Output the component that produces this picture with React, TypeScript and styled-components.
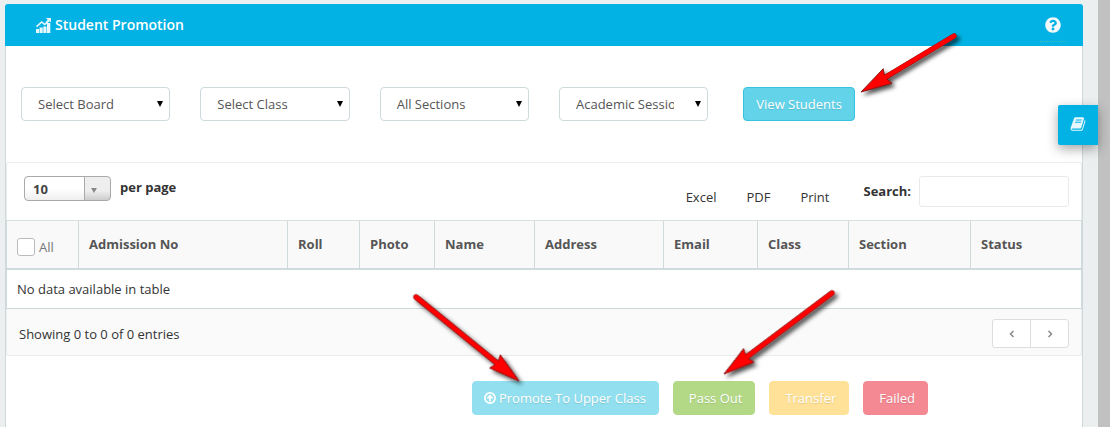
import React from "react";
import styled, { createGlobalStyle } from "styled-components";
import { FaQuestionCircle } from "react-icons/fa";

const GlobalStyle = createGlobalStyle`
  *, *::before, *::after { box-sizing: border-box; }
  body {
    margin: 0;
    background: #ebeff0;
    color: #333;
    font: 13px/20px "Open Sans", sans-serif;
    overflow: hidden;
  }
  button, input, select { font: inherit; }
`;

const Page = styled.div`
  position: relative;
  display: flex;
  min-height: 100vh;
`;

const Main = styled.main`
  flex: 1;
  display: flex;
  min-width: 0;
  padding: 4px 15px 0 5px;
`;

const ScrollTrack = styled.div`
  width: 12px;
  background: #c1c1c1;
`;

const Panel = styled.section`
  flex: 1;
  display: flex;
  flex-direction: column;
  min-width: 0;
`;

const PanelHeader = styled.header`
  display: flex;
  align-items: center;
  justify-content: space-between;
  height: 42px;
  padding: 0 17px 0 31px;
  border-radius: 3px 3px 0 0;
  background: #03b2e4;
  color: #fff;
`;

const Title = styled.h1`
  display: flex;
  align-items: center;
  gap: 4px;
  margin: 0;
  font-size: 14px;
  font-weight: 600;
`;

const HelpLink = styled.a`
  display: flex;
  justify-content: center;
  align-items: center;
  width: 26px;
  height: 34px;
  border-bottom: 1px dotted #4db8b8;
  color: #f4f9fb;
  font-size: 16px;
`;

const PanelBody = styled.div`
  flex: 1;
  padding-top: 41px;
  border: solid #cfd9db;
  border-width: 0 1px;
  background: #fff;
`;

const Filters = styled.form`
  display: grid;
  grid-template-columns: repeat(6, 1fr);
`;

const FilterCell = styled.div`
  display: flex;
  padding: 0 15px;
`;

const SelectBox = styled.div`
  position: relative;
  flex: 1;
  min-width: 0;

  &::after {
    content: "";
    position: absolute;
    top: 14px;
    right: 7px;
    border: solid transparent;
    border-width: 6px 3px 0;
    border-top-color: #000;
    pointer-events: none;
  }
`;

const Select = styled.select`
  display: block;
  width: 100%;
  height: 34px;
  padding: 0 33px 0 16px;
  border: 1px solid #cfdadd;
  border-radius: 4px;
  background: #fff;
  color: #555;
  appearance: none;
  text-overflow: clip;
`;

const Button = styled.button<{ $bg: string; $edge?: string; $pad?: string }>`
  display: flex;
  align-items: center;
  gap: 3px;
  height: 34px;
  padding: ${(p) => p.$pad ?? "0 12px"};
  border: 1px solid ${(p) => p.$edge ?? p.$bg};
  border-radius: 4px;
  background: ${(p) => p.$bg};
  color: #fff;
  white-space: nowrap;
  text-shadow: 0 1px 1px rgba(0, 0, 0, 0.12);
`;

const ViewCell = styled(FilterCell)`
  padding: 0 20px;
`;

const DataGrid = styled.div`
  margin-top: 41px;
`;

const Toolbar = styled.div`
  display: flex;
  align-items: flex-start;
  height: 58px;
  padding: 13px 12px 0 17px;
  border: 1px solid #eaeded;
  border-bottom: 0;
  border-radius: 3px 3px 0 0;
`;

const PageSize = styled.label`
  display: flex;
  gap: 9px;
  margin-right: auto;
  font-weight: 700;
  line-height: 22px;
`;

const PageSizeBox = styled.span`
  position: relative;

  &::after {
    content: "";
    position: absolute;
    top: 12px;
    right: 14px;
    border: solid transparent;
    border-width: 5px 3px 0;
    border-top-color: #888;
    pointer-events: none;
  }
`;

const PageSizeSelect = styled.select`
  display: block;
  width: 87px;
  height: 25px;
  padding: 0 8px;
  border: 1px solid #aaa;
  border-radius: 4px;
  background:
    linear-gradient(#aaa, #aaa) right 25px top / 1px 100% no-repeat,
    linear-gradient(#eee 60%, #ccc) right top / 25px 100% no-repeat,
    linear-gradient(#fff 50%, #eee);
  color: #444;
  font-weight: 700;
  appearance: none;
`;

const Exports = styled.nav`
  display: flex;
  gap: 30px;
  padding: 11px 34px 0 0;
`;

const ExportLink = styled.a`
  color: #333;
  text-decoration: none;
`;

const Search = styled.label`
  display: flex;
  gap: 8px;
  font-weight: 700;
  line-height: 30px;
`;

const SearchInput = styled.input`
  width: 150px;
  height: 31px;
  padding: 0 8px;
  border: 1px solid #eaeaea;
  border-radius: 3px;
  background: #fff;
`;

const Table = styled.table`
  width: 100%;
  table-layout: fixed;
  border-collapse: separate;
  border-spacing: 0;
  border: solid #cfdadd;
  border-width: 0 1px;
`;

const Th = styled.th`
  height: 50px;
  padding: 0 10px 2px;
  border-top: 1px solid #d8dfe1;
  border-bottom: 2px solid #cfdadd;
  background: #f9f9f9;
  color: #555;
  font-weight: 700;
  text-align: left;

  & + & { border-left: 1px solid #cfdadd; }
`;

const Td = styled.td`
  height: 39px;
  padding: 0 10px;
  border-bottom: 1px solid #cfdadd;
`;

const SelectAll = styled.label`
  display: flex;
  align-items: center;
  gap: 4px;
  padding-top: 7px;
  color: #777;
  font-weight: 400;
`;

const Checkbox = styled.input`
  width: 18px;
  height: 18px;
  margin: 0;
  border: 1px solid #bbb;
  border-radius: 3px;
  background: #fff;
  appearance: none;
`;

const Footer = styled.div`
  display: flex;
  align-items: flex-start;
  justify-content: space-between;
  height: 47px;
  padding: 10px 12px 0;
  border: 1px solid #eaeded;
  border-top: 0;
  border-radius: 0 0 3px 3px;
  background: #fafafa;
  line-height: 30px;
`;

const Pager = styled.nav`
  display: flex;
  border: 1px solid #ddd;
  border-radius: 3px;
  background: #fff;
`;

const PagerButton = styled.button`
  width: 37px;
  height: 27px;
  padding: 0;
  border: 0;
  background: none;
  color: #888;
  line-height: 0;

  & + & {
    width: 38px;
    border-left: 1px solid #ddd;
  }
`;

const Actions = styled.div`
  display: flex;
  gap: 14px;
  justify-content: flex-end;
  padding: 25px 154px 12px 0;
`;

const SideTab = styled.button`
  position: absolute;
  top: 105px;
  right: 12px;
  display: flex;
  align-items: center;
  justify-content: center;
  width: 40px;
  height: 40px;
  padding: 0 0 2px;
  border: 0;
  border-radius: 2px 0 0 2px;
  background: #03b2e4;
  box-shadow: 0 4px 12px rgba(0, 0, 0, 0.35);
`;

const Annotations = styled.svg`
  position: absolute;
  top: 0;
  left: 0;
  pointer-events: none;
  overflow: visible;
`;

const ChartIcon = () => (
  <svg width="15" height="15" viewBox="0 0 15 15" aria-hidden="true">
    <path
      fill="#fff"
      fillOpacity=".9"
      d="M0 11h3v4H0zM3.500 9.500h3.200V15H3.500zM7.300 8.500h3.200V15H7.300zM11 5h3.300v10H11zM10 0h5v4.500l-1.500-1.300L8.800 7.500 5.800 5 1 9.200 0 8 5.600 3 8.700 5.500l3-3.700z"
    />
  </svg>
);

const BookIcon = () => (
  <svg width="16" height="16" viewBox="0 0 1664 1792" aria-hidden="true">
    <path
      fill="#e6f7fd"
      d="M1639 478q40 57 18 129l-275 906q-19 64-76.500 107.500t-122.500 43.500h-923q-77 0-148.500-53.500t-99.500-131.500q-24-67-2-127 0-4 3-27t4-37q1-8-3-21.500t-3-19.500q2-11 8-21t16.500-23.500 16.500-23.500q23-38 45-91.500t30-91.500q3-10 .5-30t-.5-28q3-11 17-28t17-23q21-36 42-92t25-90q1-9-2.500-32t.5-28q4-13 22-30.500t22-22.500q19-26 42.500-84.500t27.500-96.500q1-8-3-25.500t-2-26.500q2-8 9-18t18-23 17-21q8-12 16.500-30.500t15-35 16-36 19.500-32 26.500-23.500 36-11.500 47.500 5.500l-1 3q38-9 51-9h761q74 0 114 56t18 130l-274 906q-36 119-71.500 153.500t-128.500 34.500h-869q-27 0-38 15-11 16-1 43 24 70 144 70h923q29 0 56-15.500t35-41.500l300-987q7-22 5-57 38 15 59 43zm-1064 2q-4 13 2 22.500t20 9.500h608q13 0 25.500-9.500t16.500-22.500l21-64q4-13-2-22.500t-20-9.500h-608q-13 0-25.500 9.500t-16.500 22.500zm-83 256q-4 13 2 22.500t20 9.500h608q13 0 25.500-9.500t16.500-22.500l21-64q4-13-2-22.500t-20-9.500h-608q-13 0-25.500 9.500t-16.500 22.500z"
    />
  </svg>
);

const CircleUpIcon = () => (
  <svg width="12" height="12" viewBox="0 0 12 12" fill="none" stroke="#fff" strokeWidth="1.700" aria-hidden="true">
    <circle cx="6" cy="6" r="5.100" />
    <path d="M6 9.500V4M3.400 6.300 6 3.700l2.600 2.600" />
  </svg>
);

const Chevron = ({ d }: { d: string }) => (
  <svg width="6" height="8" viewBox="0 0 6 8" fill="none" stroke="#888" strokeWidth="1.500" aria-hidden="true">
    <path d={d} />
  </svg>
);

/* Red pointer drawn from its tail to a tip at (x, y). */
const Arrow = ({ x, y, tailX, tailY }: { x: number; y: number; tailX: number; tailY: number }) => {
  const length = Math.hypot(tailX - x, tailY - y);
  const angle = (Math.atan2(tailY - y, tailX - x) * 180) / Math.PI;
  return (
    <g transform={`translate(${x} ${y}) rotate(${angle})`}>
      <path d={`M26 0H${length}`} stroke="#7a1010" strokeWidth="5.400" strokeLinecap="round" />
      <path d="M0 0 31-8.500 28 0 31 8.500z" fill="#f00" stroke="#7a1010" strokeWidth=".8" />
      <path d={`M26 0H${length}`} stroke="#f00" strokeWidth="4.600" strokeLinecap="round" />
    </g>
  );
};

const filters = ["Select Board", "Select Class", "All Sections", "Academic Session"];

const columns = [
  { name: "", width: 71 },
  { name: "Admission No", width: 209 },
  { name: "Roll", width: 72 },
  { name: "Photo", width: 75 },
  { name: "Name", width: 100 },
  { name: "Address", width: 129 },
  { name: "Email", width: 94 },
  { name: "Class", width: 91 },
  { name: "Section", width: 122 },
  { name: "Status", width: 111 },
];

const totalWidth = columns.reduce((sum, c) => sum + c.width, 0);

export default function App() {
  return (
    <Page>
      <GlobalStyle />
      <Main>
        <Panel>
          <PanelHeader>
            <Title>
              <ChartIcon />
              Student Promotion
            </Title>
            <HelpLink href="#help" aria-label="Help">
              <FaQuestionCircle />
            </HelpLink>
          </PanelHeader>
          <PanelBody>
            <Filters onSubmit={(e) => e.preventDefault()}>
              {filters.map((name) => (
                <FilterCell key={name}>
                  <SelectBox>
                    <Select aria-label={name}>
                      <option>{name}</option>
                    </Select>
                  </SelectBox>
                </FilterCell>
              ))}
              <ViewCell>
                <Button type="submit" $bg="#63d3e9" $edge="#36c3e0">View Students</Button>
              </ViewCell>
            </Filters>

            <DataGrid>
              <Toolbar>
                <PageSize>
                  <PageSizeBox>
                    <PageSizeSelect>
                      <option>10</option>
                    </PageSizeSelect>
                  </PageSizeBox>
                  per page
                </PageSize>
                <Exports>
                  <ExportLink href="#excel">Excel</ExportLink>
                  <ExportLink href="#pdf">PDF</ExportLink>
                  <ExportLink href="#print">Print</ExportLink>
                </Exports>
                <Search>
                  Search:
                  <SearchInput type="search" />
                </Search>
              </Toolbar>
              <Table>
                <colgroup>
                  {columns.map((c) => (
                    <col key={c.name} width={`${(c.width / totalWidth) * 100}%`} />
                  ))}
                </colgroup>
                <thead>
                  <tr>
                    {columns.map((c) => (
                      <Th key={c.name} scope="col">
                        {c.name || (
                          <SelectAll>
                            <Checkbox type="checkbox" />
                            All
                          </SelectAll>
                        )}
                      </Th>
                    ))}
                  </tr>
                </thead>
                <tbody>
                  <tr>
                    <Td colSpan={columns.length}>No data available in table</Td>
                  </tr>
                </tbody>
              </Table>
              <Footer>
                <span>Showing 0 to 0 of 0 entries</span>
                <Pager aria-label="Pages">
                  <PagerButton aria-label="Previous page">
                    <Chevron d="M4.500 1 1.500 4l3 3" />
                  </PagerButton>
                  <PagerButton aria-label="Next page">
                    <Chevron d="M1.500 1l3 3-3 3" />
                  </PagerButton>
                </Pager>
              </Footer>
            </DataGrid>

            <Actions>
              <Button $bg="#92e0ef" $pad="0 12px 0 11px">
                <CircleUpIcon />
                Promote To Upper Class
              </Button>
              <Button $bg="#b3d987" $pad="0 12px 0 15px">Pass Out</Button>
              <Button $bg="#ffe197" $pad="0 12px 0 15px">Transfer</Button>
              <Button $bg="#f48893" $pad="0 12px 0 15px">Failed</Button>
            </Actions>
          </PanelBody>
        </Panel>
      </Main>
      <ScrollTrack />
      <SideTab aria-label="Guide">
        <BookIcon />
      </SideTab>
      <Annotations width="1" height="1" fill="none" aria-hidden="true">
        <defs>
          <filter id="shadow" filterUnits="userSpaceOnUse" x="380" y="0" width="620" height="427">
            <feDropShadow dx="3" dy="3" stdDeviation="2" floodOpacity="0.7" />
          </filter>
        </defs>
        <g filter="url(#shadow)">
          <Arrow x={861} y={92} tailX={954} tailY={36} />
          <Arrow x={519} y={381} tailX={416} tailY={297} />
          <Arrow x={724} y={374} tailX={832} tailY={293} />
        </g>
      </Annotations>
    </Page>
  );
}
